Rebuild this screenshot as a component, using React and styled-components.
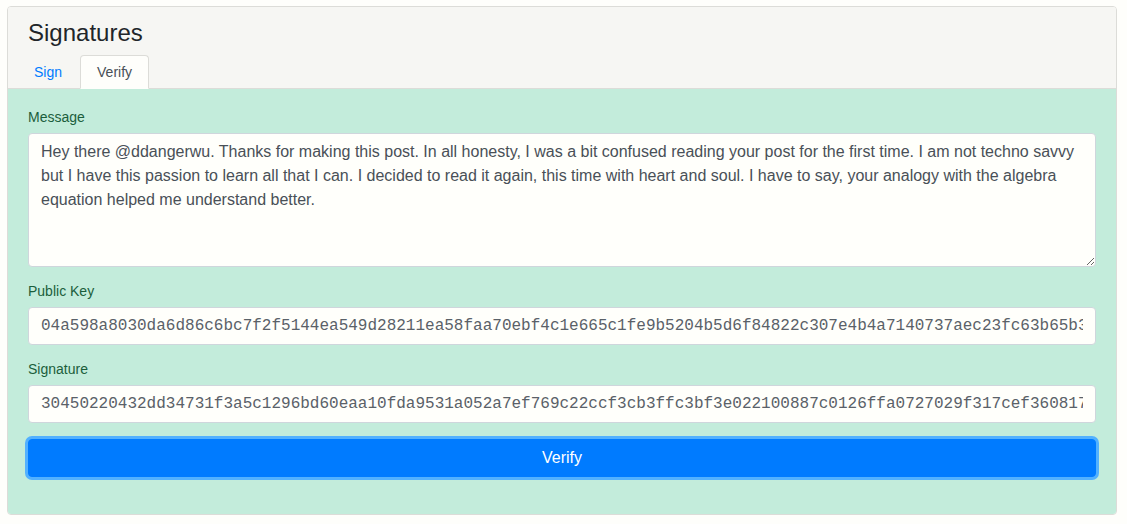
import React from 'react'
import styled, { createGlobalStyle } from 'styled-components'

const GlobalStyle = createGlobalStyle`
    body {
        margin: 0;
        background: #fefefb;
        font-family: "Liberation Sans", Arial, sans-serif;
    }
`

const Card = styled.section`
    margin: 6px 10px 0 7px;
    border: 1px solid #dcdcd8;
    border-radius: 4px;
    overflow: hidden;
`

const Header = styled.header`
    background: #f6f6f3;
    padding: 12px 20px 0;
    border-bottom: 1px solid #dcdcd8;
`

const Title = styled.h3`
    margin: 0 0 7px;
    font-size: 24px;
    font-weight: 400;
    line-height: 1.2;
    color: #212529;
`

const Tabs = styled.nav`
    display: flex;
    gap: 1px;
    margin: 0 -10px -1px -11px;
`

const Tab = styled.a`
    display: block;
    height: 34px;
    box-sizing: border-box;
    padding: 8px 16px;
    font-size: 14px;
    line-height: 17px;
    text-decoration: none;
    cursor: pointer;
    border: 1px solid ${p => (p.$active ? '#dcdcd8' : 'transparent')};
    border-bottom-color: ${p => (p.$active ? '#fefefb' : 'transparent')};
    border-radius: 4px 4px 0 0;
    background: ${p => (p.$active ? '#fefefb' : 'transparent')};
    color: ${p => (p.$active ? '#495057' : '#007bff')};
`

const Body = styled.form`
    background: #c3ecdb;
    padding: 20px 20px 4px;
`

const Group = styled.div`
    margin-bottom: ${p => p.$last ? '33px' : '16px'};
`

const Label = styled.label`
    display: block;
    font-size: 14px;
    line-height: 17px;
    margin-bottom: 7px;
    color: #1b5e3b;
`

const fieldBase = `
    display: block;
    width: 100%;
    box-sizing: border-box;
    padding: 6px 12px;
    font-size: 16px;
    line-height: 24px;
    color: #495057;
    background: #fffffb;
    border: 1px solid #cfd6dc;
    border-radius: 4px;
    outline: none;
`

const TextArea = styled.textarea`
    ${fieldBase}
    font-family: "Liberation Sans", Arial, sans-serif;
    resize: vertical;
`

const Input = styled.input`
    ${fieldBase}
    height: 38px;
    font-family: "Liberation Mono", "Courier New", monospace;
    color: #5a6168;
`

const Button = styled.button`
    display: block;
    width: 100%;
    height: 38px;
    border: 1px solid #007bff;
    border-radius: 4px;
    background: #007bff;
    color: #fff;
    font-family: "Liberation Sans", Arial, sans-serif;
    font-size: 16px;
    box-shadow: 0 0 0 3px #52b1ff;
    cursor: pointer;
`

const MESSAGE = 'Hey there @ddangerwu. Thanks for making this post. In all honesty, I was a bit confused reading your post for the first time. I am not techno savvy but I have this passion to learn all that I can. I decided to read it again, this time with heart and soul. I have to say, your analogy with the algebra equation helped me understand better.'
const PUBLIC_KEY = '04a598a8030da6d86c6bc7f2f5144ea549d28211ea58faa70ebf4c1e665c1fe9b5204b5d6f84822c307e4b4a7140737aec23fc63b65b3a5f2c91e0d7'
const SIGNATURE = '30450220432dd34731f3a5c1296bd60eaa10fda9531a052a7ef769c22ccf3cb3ffc3bf3e022100887c0126ffa0727029f317cef360817c2a4e9b1d'

export default function App() {
    return (
        <>
            <GlobalStyle />
            <Card>
                <Header>
                    <Title>Signatures</Title>
                    <Tabs>
                        <Tab>Sign</Tab>
                        <Tab $active>Verify</Tab>
                    </Tabs>
                </Header>
                <Body onSubmit={e => e.preventDefault()}>
                    <Group>
                        <Label>Message</Label>
                        <TextArea rows={5} defaultValue={MESSAGE} />
                    </Group>
                    <Group>
                        <Label>Public Key</Label>
                        <Input defaultValue={PUBLIC_KEY} />
                    </Group>
                    <Group>
                        <Label>Signature</Label>
                        <Input defaultValue={SIGNATURE} />
                    </Group>
                    <Group $last>
                        <Button type="submit">Verify</Button>
                    </Group>
                </Body>
            </Card>
        </>
    )
}
